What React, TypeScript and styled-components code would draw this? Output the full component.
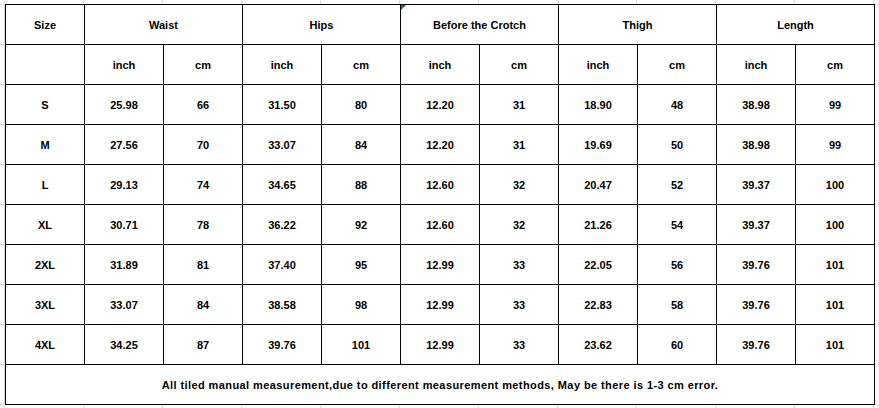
import React from "react";
import styled, { createGlobalStyle } from "styled-components";

const GlobalStyle = createGlobalStyle`
  html, body {
    margin: 0;
    padding: 0;
  }
  body {
    width: 879px;
    height: 408px;
    overflow: hidden;
    background-color: #fff;
    /* spreadsheet gridlines behind the table */
    background-image:
      linear-gradient(to right, #dadcdd 1px, transparent 1px),
      linear-gradient(to bottom, #dadcdd 1px, transparent 1px);
    background-size: 79px 40px;
    background-position: 4px 4px;
    font-family: "Liberation Sans", Arial, sans-serif;
  }
`;

const Sheet = styled.div`
  padding: 4px 0 0 5px;
`;

const Grid = styled.div`
  display: grid;
  grid-template-columns: repeat(11, 79px);
  grid-auto-rows: 40px;
  width: max-content;
  border-left: 1px solid #000;
  border-top: 1px solid #000;
  background: #fff;
`;

const Cell = styled.div<{ $span?: number }>`
  position: relative;
  grid-column: span ${(p) => p.$span ?? 1};
  display: flex;
  align-items: center;
  justify-content: center;
  border-right: 1px solid #000;
  border-bottom: 1px solid #000;
  font-size: 11px;
  font-weight: bold;
  color: #000;
  white-space: nowrap;
`;

const Note = styled(Cell)`
  letter-spacing: 0.41px;
`;

const ErrorMark = styled.span`
  position: absolute;
  top: 0;
  left: 0;
  width: 0;
  height: 0;
  border-top: 5px solid #1e7a2e;
  border-right: 5px solid transparent;
`;

const groups = ["Waist", "Hips", "Before the Crotch", "Thigh", "Length"];

const rows: [string, ...string[]][] = [
  ["S", "25.98", "66", "31.50", "80", "12.20", "31", "18.90", "48", "38.98", "99"],
  ["M", "27.56", "70", "33.07", "84", "12.20", "31", "19.69", "50", "38.98", "99"],
  ["L", "29.13", "74", "34.65", "88", "12.60", "32", "20.47", "52", "39.37", "100"],
  ["XL", "30.71", "78", "36.22", "92", "12.60", "32", "21.26", "54", "39.37", "100"],
  ["2XL", "31.89", "81", "37.40", "95", "12.99", "33", "22.05", "56", "39.76", "101"],
  ["3XL", "33.07", "84", "38.58", "98", "12.99", "33", "22.83", "58", "39.76", "101"],
  ["4XL", "34.25", "87", "39.76", "101", "12.99", "33", "23.62", "60", "39.76", "101"],
];

export default function App() {
  return (
    <>
      <GlobalStyle />
      <Sheet>
        <Grid>
          <Cell>Size</Cell>
          {groups.map((g) => (
            <Cell key={g} $span={2}>
              {g === "Before the Crotch" && <ErrorMark />}
              {g}
            </Cell>
          ))}

          <Cell />
          {groups.map((g) => (
            <React.Fragment key={g}>
              <Cell>inch</Cell>
              <Cell>cm</Cell>
            </React.Fragment>
          ))}

          {rows.map((r) =>
            r.map((v, i) => <Cell key={r[0] + i}>{v}</Cell>)
          )}

          <Note $span={11}>
            All tiled manual measurement,due to different measurement methods, May be there is 1-3 cm error.
          </Note>
        </Grid>
      </Sheet>
    </>
  );
}
